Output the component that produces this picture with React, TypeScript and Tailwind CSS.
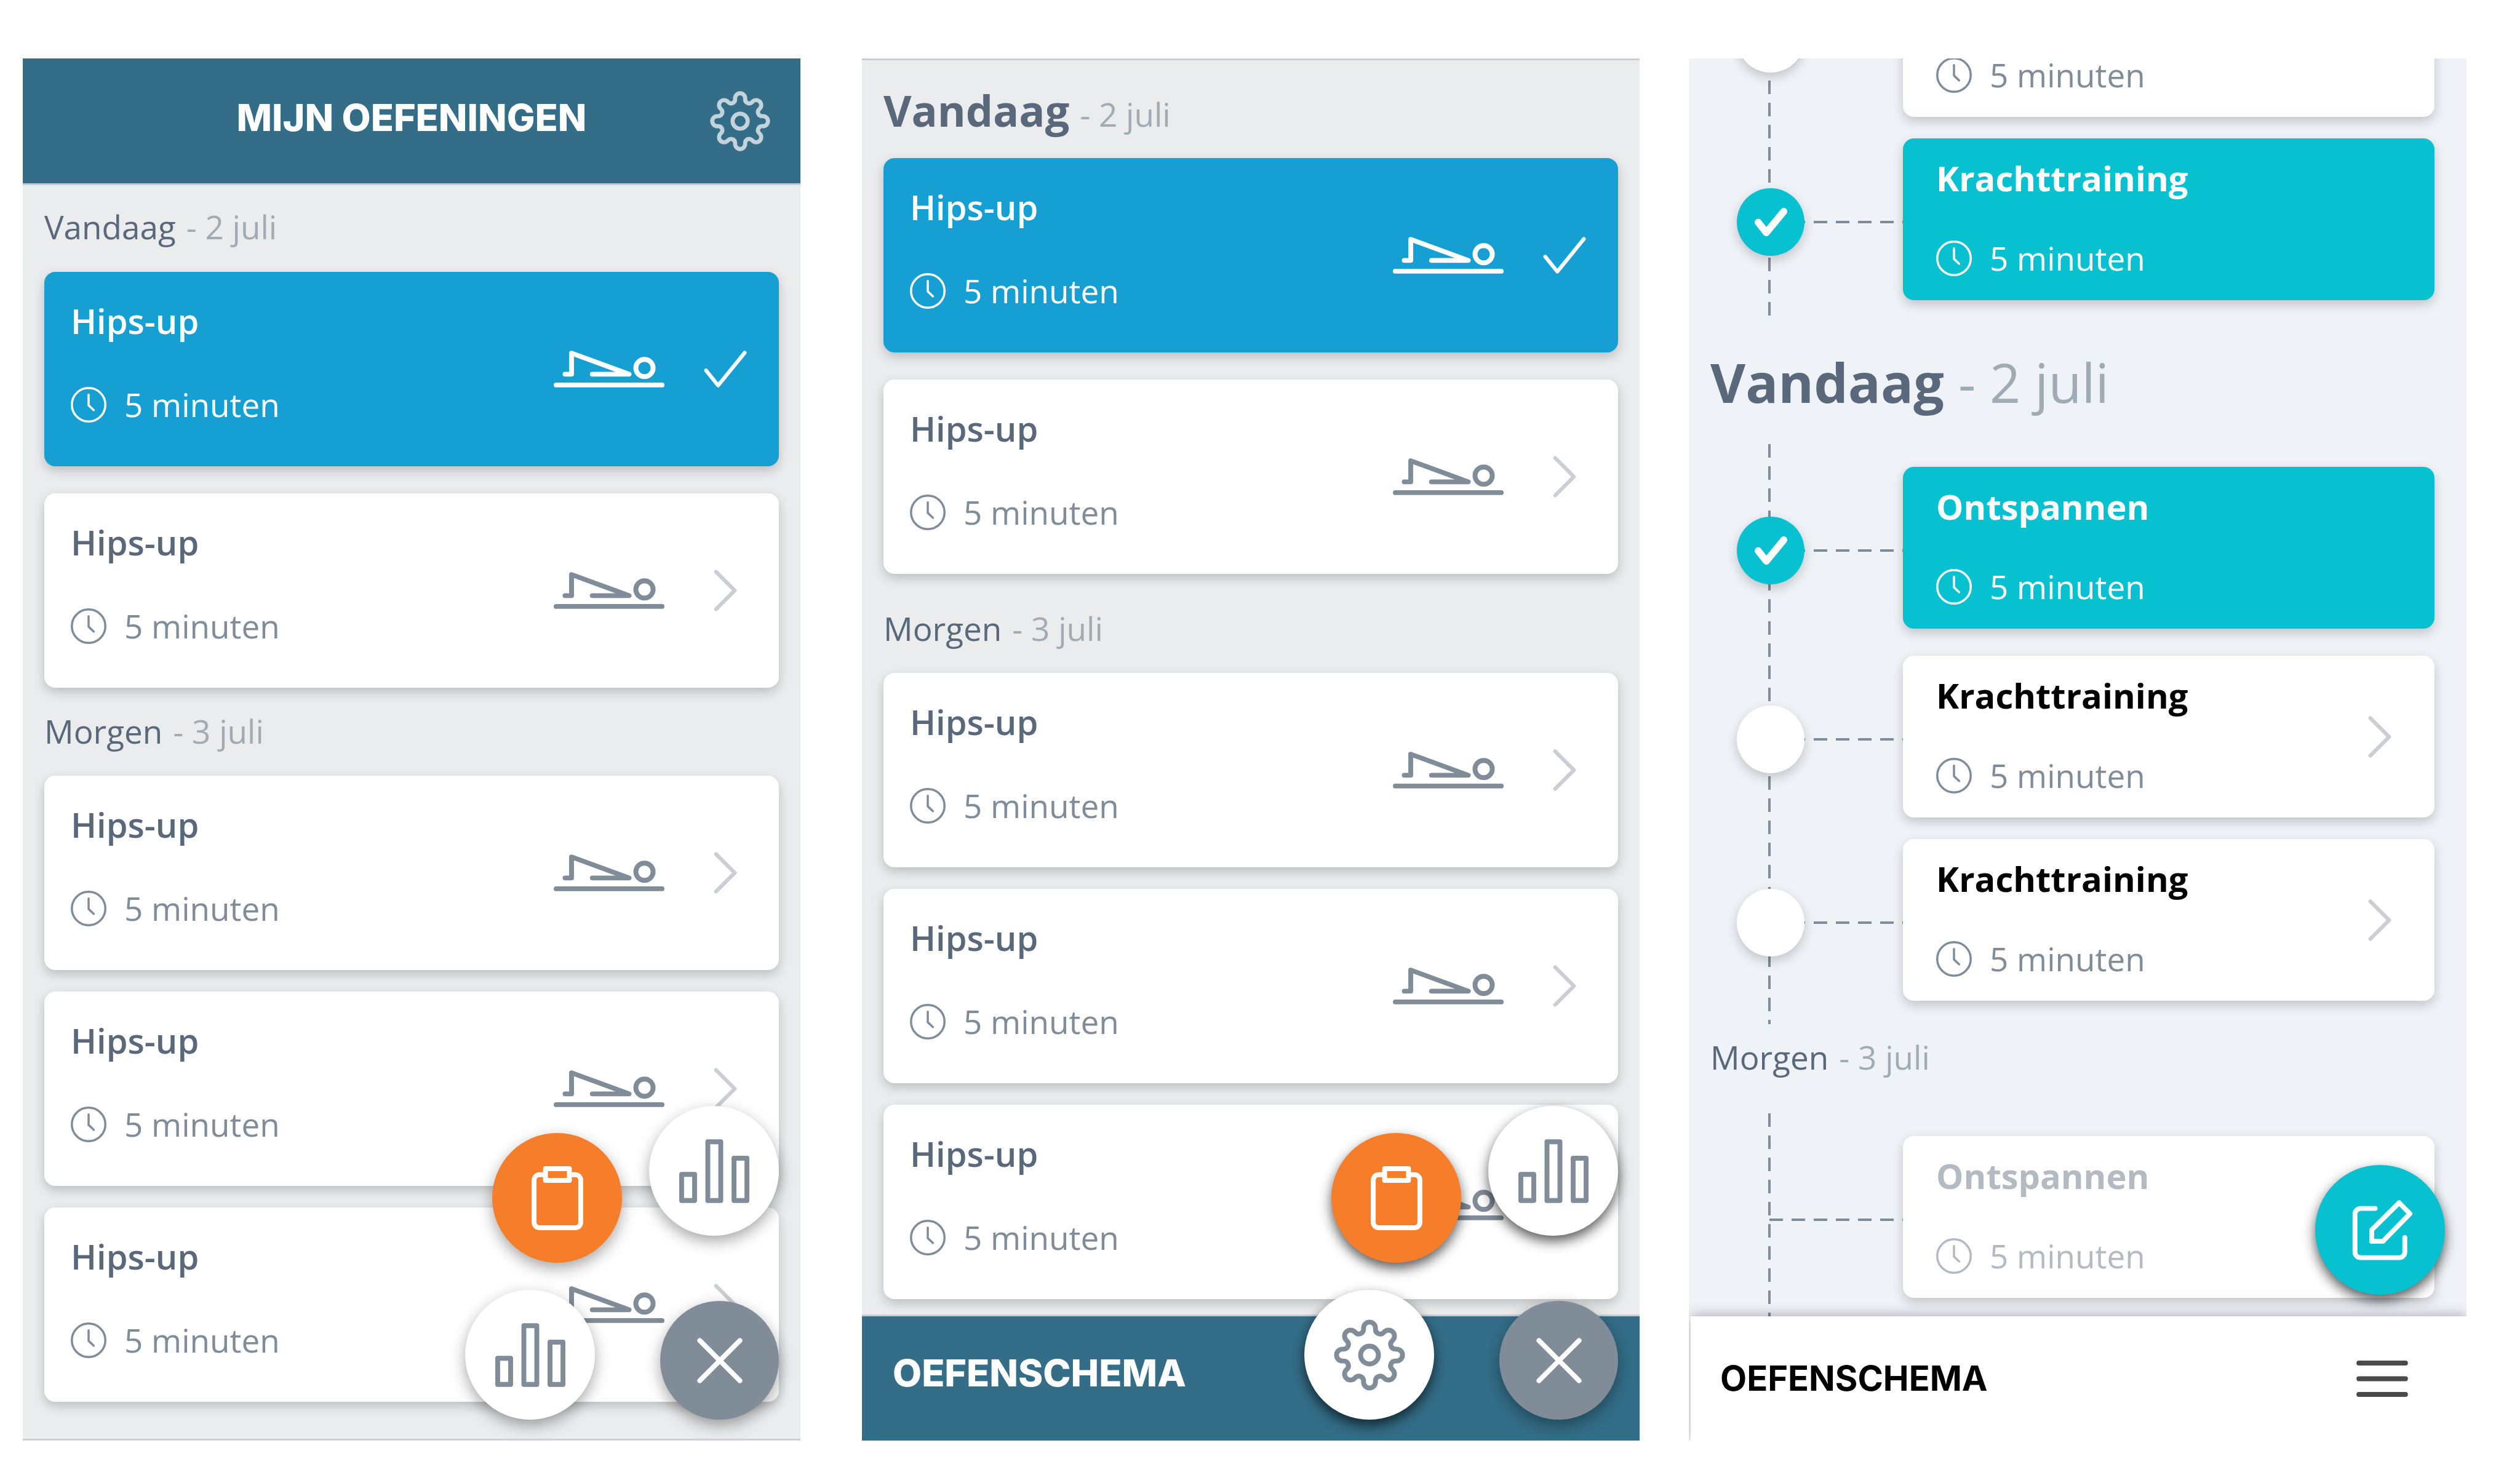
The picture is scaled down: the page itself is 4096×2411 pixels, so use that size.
import React from "react";

const sans = "font-['Open_Sans',sans-serif]";
const caps = "font-['Inter',sans-serif]";

function gearPath() {
  const parts: string[] = [];
  const turn = (x: number, y: number, i: number) => {
    const a = (i * Math.PI) / 4;
    const px = x * Math.cos(a) - y * Math.sin(a);
    const py = x * Math.sin(a) + y * Math.cos(a);
    return `${px.toFixed(2)} ${py.toFixed(2)}`;
  };
  for (let i = 0; i < 8; i++) {
    parts.push(i === 0 ? `M${turn(-11, -47.9, 0)}` : `A8.8 8.8 0 0 0 ${turn(-11, -47.9, i)}`);
    parts.push(`L${turn(-11, -50, i)}`);
    parts.push(`A11 11 0 0 1 ${turn(11, -50, i)}`);
    parts.push(`L${turn(11, -47.9, i)}`);
  }
  parts.push(`A8.8 8.8 0 0 0 ${turn(-11, -47.9, 0)}Z`);
  return parts.join("");
}

const GEAR = gearPath();

function Gear({ className }: { className: string }) {
  return (
    <svg viewBox="-66 -66 132 132" className={className} fill="none" stroke="currentColor" strokeWidth="9" aria-hidden="true">
      <path d={GEAR} />
      <circle r="16.5" />
    </svg>
  );
}

function Clock() {
  return (
    <svg viewBox="0 0 66 66" className="size-[58px] shrink-0" fill="none" stroke="currentColor" strokeWidth="4" strokeLinecap="round" strokeLinejoin="round" aria-hidden="true">
      <circle cx="33" cy="33" r="31" />
      <path d="M33 14.500V34L42.500 43" />
    </svg>
  );
}

function HipsUp() {
  return (
    <svg viewBox="0 0 205 68" className="h-[60px] w-[180px] shrink-0" fill="none" stroke="currentColor" strokeWidth="9" strokeLinecap="round" strokeLinejoin="round" aria-hidden="true">
      <path d="M4.500 63.500H200.500" />
      <path d="M21 43.500H33V4.500L139.500 43.500H71.500" />
      <circle cx="168" cy="32" r="16" />
    </svg>
  );
}

function Tick() {
  return (
    <svg viewBox="0 0 80 70" className="h-[61px] w-[70px]" fill="none" stroke="currentColor" strokeWidth="7" strokeLinecap="round" strokeLinejoin="round" aria-hidden="true">
      <path d="M4 37L26.500 65L76 4" />
    </svg>
  );
}

function Chevron() {
  return (
    <svg viewBox="0 0 43 78" className="h-[68px] w-[38px]" fill="none" stroke="#cbced2" strokeWidth="7" strokeLinecap="round" strokeLinejoin="round" aria-hidden="true">
      <path d="M4 4L39 39L4 74" />
    </svg>
  );
}

function Bars() {
  return (
    <svg viewBox="0 0 130 118" className="h-[104px] w-[114px]" fill="none" stroke="currentColor" strokeWidth="9" strokeLinejoin="round" aria-hidden="true">
      <rect x="4.500" y="65" width="24" height="48.500" />
      <rect x="53" y="4.500" width="24" height="109" />
      <rect x="101.500" y="35" width="24" height="78.500" />
    </svg>
  );
}

function Clipboard() {
  return (
    <svg viewBox="0 0 95 118" className="h-[104px] w-[84px]" fill="none" stroke="currentColor" strokeWidth="9" strokeLinejoin="round" aria-hidden="true">
      <path d="M25.500 15.500H14.500A10 10 0 0 0 4.500 25.500V103.500A10 10 0 0 0 14.500 113.500H80.500A10 10 0 0 0 90.500 103.500V25.500A10 10 0 0 0 80.500 15.500H69.500" />
      <rect x="25.500" y="4.500" width="44" height="21.500" />
    </svg>
  );
}

function Cross() {
  return (
    <svg viewBox="0 0 84 84" className="size-[74px]" fill="none" stroke="currentColor" strokeWidth="9" strokeLinecap="round" aria-hidden="true">
      <path d="M5 5L79 79M79 5L5 79" />
    </svg>
  );
}

function Edit() {
  return (
    <svg viewBox="-10 0 122 112" className="h-[98px] w-[107px]" fill="none" stroke="currentColor" strokeWidth="9" strokeLinecap="round" strokeLinejoin="round" aria-hidden="true">
      <path d="M42 15.500H15A10.500 10.500 0 0 0 4.500 26V96.500A10.500 10.500 0 0 0 15 107H86.500A10.500 10.500 0 0 0 97 96.500V69.500" />
      <path d="M35.500 76.500V55.500L86.500 5L106.500 25.500L56.500 76.500Z" />
    </svg>
  );
}

function Menu() {
  return (
    <svg viewBox="0 0 95 67" className="h-[59px] w-[84px]" fill="none" stroke="currentColor" strokeWidth="9" strokeLinecap="round" aria-hidden="true">
      <path d="M4.500 4.500H90.500M4.500 33.500H90.500M4.500 62.500H90.500" />
    </svg>
  );
}

function DayLabel({ day, date, className }: { day: string; date: string; className: string }) {
  return (
    <h2 className={`flex items-baseline gap-[17px] px-[35px] text-[53px] leading-[72px] text-[#5a687c] ${className}`}>
      {day} <span className="text-[#a1abb4]">- {date}</span>
    </h2>
  );
}

function ExerciseCard({ done = false }: { done?: boolean }) {
  return (
    <a
      href="#oefening"
      className={`flex items-center rounded-[18px] pr-[52px] pl-[43px] shadow-[0_7px_18px_rgba(0,0,0,0.2)] ${
        done ? "bg-[#169fd2] text-white" : "bg-white text-[#818c99]"
      }`}
    >
      <div className="flex flex-1 flex-col gap-[63px] pt-[41px] pb-[64px]">
        <h3 className={`text-[56px] leading-[76px] font-semibold ${done ? "" : "text-[#5a687c]"}`}>Hips-up</h3>
        <p className="flex items-center gap-[29px] text-[53px] leading-[72px]">
          <Clock />5 minuten
        </p>
      </div>
      <HipsUp />
      <span className="ml-[64px] flex w-[70px] justify-center">{done ? <Tick /> : <Chevron />}</span>
    </a>
  );
}

const dashX = "bg-[repeating-linear-gradient(to_right,#818c99_0_22px,transparent_22px_36px)]";
const dashY = "bg-[repeating-linear-gradient(to_bottom,#818c99_0_22px,transparent_22px_36px)]";

type State = "done" | "open" | "later";

function Marker({ state }: { state: State }) {
  if (state === "later") return null;
  return (
    <span
      className={`col-start-1 row-start-1 ml-[78px] flex size-[110px] items-center justify-center rounded-full shadow-[0_7px_18px_rgba(0,0,0,0.2)] ${
        state === "done" ? "bg-[#08c1d0] text-white" : "bg-white"
      }`}
    >
      {state === "done" && (
        <svg viewBox="0 0 60 52" className="h-[46px] w-[53px]" fill="none" stroke="currentColor" strokeWidth="13" strokeLinecap="round" strokeLinejoin="round" aria-hidden="true">
          <path d="M6.500 26.500L21.500 45.500L53.500 6.500" />
        </svg>
      )}
    </span>
  );
}

function TimelineRow({ title, state }: { title?: string; state: State }) {
  return (
    <li className={`flex ${state === "done" ? "mb-[9px]" : ""}`}>
      <div className="grid w-[348px] shrink-0 items-center pt-[8px]">
        <span className={`col-start-1 row-start-1 ml-[131px] h-[4px] ${dashX}`} />
        <Marker state={state} />
      </div>
      <a
        href="#oefening"
        className={`flex flex-1 items-center rounded-[18px] pr-[70px] pl-[54px] shadow-[0_7px_18px_rgba(0,0,0,0.2)] ${
          state === "done" ? "bg-[#08c1d0] text-white" : "bg-white"
        }`}
      >
        <div className="flex min-h-[263px] flex-1 flex-col justify-end gap-[64px] pt-[26px] pb-[39px]">
          {title && (
            <h3
              className={`text-[56px] leading-[76px] font-bold ${
                state === "open" ? "text-black" : state === "later" ? "text-[#b3bac2]" : ""
              }`}
            >
              {title}
            </h3>
          )}
          <p
            className={`flex items-center gap-[29px] text-[53px] leading-[52px] ${
              state === "open" ? "text-[#818c99]" : state === "later" ? "text-[#b3bac2]" : ""
            }`}
          >
            <Clock />5 minuten
          </p>
        </div>
        {state === "open" && title && <Chevron />}
      </a>
    </li>
  );
}

function Timeline({ className, children }: { className: string; children: React.ReactNode }) {
  return (
    <div className="relative">
      <span className={`absolute inset-y-0 left-[129px] w-[4px] ${dashY}`} />
      <ul className={`relative flex flex-col gap-[35px] pr-[52px] ${className}`}>{children}</ul>
    </div>
  );
}

const fab = "absolute flex items-center justify-center rounded-full";
const soft = "shadow-[0_9px_24px_rgba(0,0,0,0.35)]";
const hard = "shadow-[0_9px_20px_rgba(0,0,0,0.65)]";

function ExerciseList() {
  return (
    <section className="relative flex-1 overflow-hidden border-b-[3px] border-[#cdd0d5] bg-[#ebeced] pb-[60px]">
      <header className="grid h-[206px] grid-cols-[1fr_auto_1fr] items-center border-b-[3px] border-[#c6ced4] bg-[#336d87] px-[49px]">
        <h1 className={`col-start-2 pb-[12px] text-[61px] leading-[72px] font-extrabold text-white ${caps}`}>MIJN OEFENINGEN</h1>
        <button type="button" aria-label="Instellingen" className="justify-self-end text-[#c3d3db]">
          <Gear className="size-[98px]" />
        </button>
      </header>
      <DayLabel day="Vandaag" date="2 juli" className="pt-[32px] pb-[37px]" />
      <div className="flex flex-col gap-[44px] px-[35px]">
        <ExerciseCard done />
        <ExerciseCard />
      </div>
      <DayLabel day="Morgen" date="3 juli" className="pt-[35px] pb-[36px]" />
      <div className="flex flex-col gap-[35px] px-[35px]">
        <ExerciseCard />
        <ExerciseCard />
        <ExerciseCard />
      </div>
      <button type="button" aria-label="Statistieken" className={`${fab} ${soft} right-[35px] bottom-[330px] size-[211px] bg-white text-[#818c99]`}>
        <Bars />
      </button>
      <button type="button" aria-label="Schema" className={`${fab} ${soft} right-[290px] bottom-[286px] size-[211px] bg-[#f67e2b] text-white`}>
        <Clipboard />
      </button>
      <button type="button" aria-label="Voortgang" className={`${fab} ${soft} right-[334px] bottom-[31px] size-[211px] bg-white text-[#818c99]`}>
        <Bars />
      </button>
      <button type="button" aria-label="Sluiten" className={`${fab} ${soft} right-[35px] bottom-[31px] size-[193px] bg-[#818c99] text-white`}>
        <Cross />
      </button>
    </section>
  );
}

function ExerciseSchema() {
  return (
    <section className="relative ml-[100px] flex-1 overflow-hidden border-t-[3px] border-[#c9cdd2] bg-[#ebeced]">
      <h2 className="flex items-baseline gap-[17px] px-[35px] pt-[33px] pb-[30px] text-[70px] leading-[96px] font-bold text-[#5a687c]">
        Vandaag <span className="text-[53px] leading-[72px] font-normal text-[#a1abb4]">- 2 juli</span>
      </h2>
      <div className="flex flex-col gap-[44px] px-[35px]">
        <ExerciseCard done />
        <ExerciseCard />
      </div>
      <DayLabel day="Morgen" date="3 juli" className="pt-[53px] pb-[36px]" />
      <div className="flex flex-col gap-[35px] px-[35px] pb-[25px]">
        <ExerciseCard />
        <ExerciseCard />
        <ExerciseCard />
      </div>
      <footer className="flex h-[205px] items-center border-t-[3px] border-[#c6ced4] bg-[#336d87] px-[50px] pb-[18px]">
        <h1 className={`text-[61px] leading-[72px] font-extrabold text-white ${caps}`}>OEFENSCHEMA</h1>
      </footer>
      <button type="button" aria-label="Statistieken" className={`${fab} ${hard} right-[35px] bottom-[333px] size-[211px] bg-white text-[#818c99]`}>
        <Bars />
      </button>
      <button type="button" aria-label="Schema" className={`${fab} ${hard} right-[290px] bottom-[289px] size-[211px] bg-[#f67e2b] text-white`}>
        <Clipboard />
      </button>
      <button type="button" aria-label="Instellingen" className={`${fab} ${hard} right-[334px] bottom-[34px] size-[211px] bg-white text-[#818c99]`}>
        <Gear className="size-[116px]" />
      </button>
      <button type="button" aria-label="Sluiten" className={`${fab} ${soft} right-[35px] bottom-[34px] size-[193px] bg-[#818c99] text-white`}>
        <Cross />
      </button>
    </section>
  );
}

function TimelineSchema() {
  return (
    <section className="relative ml-[80px] flex flex-1 flex-col overflow-hidden bg-[#eff3f8]">
      <div className="flex h-[418px] flex-col justify-end">
        <Timeline className="pt-[48px] pb-[16px]">
          <TimelineRow state="open" />
          <TimelineRow title="Krachttraining" state="done" />
        </Timeline>
      </div>
      <h2 className="flex items-baseline gap-[23px] px-[35px] pt-[48px] pb-[41px] text-[88px] leading-[120px] font-bold text-[#5a687c]">
        Vandaag <span className="font-normal text-[#a1abb4]">- 2 juli</span>
      </h2>
      <Timeline className="pt-[37px] pb-[38px]">
        <TimelineRow title="Ontspannen" state="done" />
        <TimelineRow title="Krachttraining" state="open" />
        <TimelineRow title="Krachttraining" state="open" />
      </Timeline>
      <DayLabel day="Morgen" date="3 juli" className="pt-[18px] pb-[55px]" />
      <Timeline className="pt-[37px] pb-[30px]">
        <TimelineRow title="Ontspannen" state="later" />
      </Timeline>
      <footer className="relative bg-white pl-[3px]">
        <div className="flex h-[202px] items-center justify-between bg-white pr-[95px] pl-[48px] shadow-[0_0_20px_rgba(0,0,0,0.35)]">
          <h1 className={`text-[56px] leading-[72px] font-bold text-black ${caps}`}>OEFENSCHEMA</h1>
          <button type="button" aria-label="Menu" className="text-[#4a4a4a]">
            <Menu />
          </button>
        </div>
      </footer>
      <button type="button" aria-label="Bewerken" className={`${fab} ${hard} right-[35px] bottom-[237px] size-[211px] bg-[#08c1d0] text-white`}>
        <Edit />
      </button>
    </section>
  );
}

export default function App() {
  return (
    <main className={`flex min-h-screen items-start bg-white pt-[95px] pr-[87px] pb-[69px] pl-[37px] ${sans}`}>
      <ExerciseList />
      <ExerciseSchema />
      <TimelineSchema />
    </main>
  );
}
